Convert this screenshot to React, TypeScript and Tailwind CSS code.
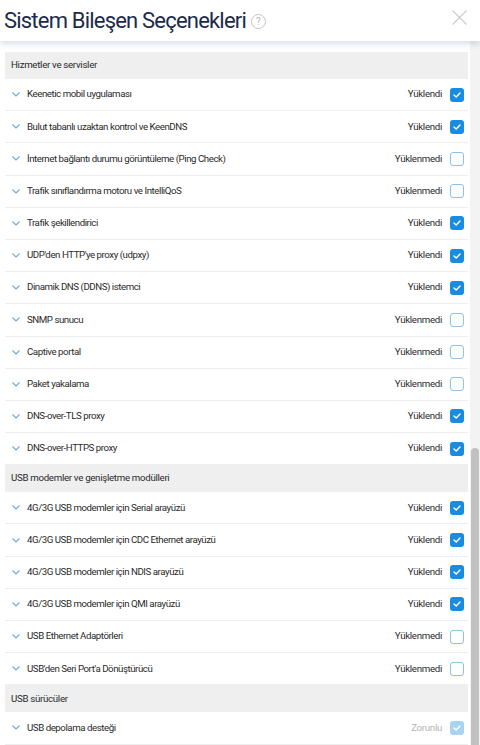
import React from "react";

type Row = { label: string; status: "Yüklendi" | "Yüklenmedi" | "Zorunlu" };
type Section = { title: string; rows: Row[] };

const sections: Section[] = [
  {
    title: "Hizmetler ve servisler",
    rows: [
      { label: "Keenetic mobil uygulaması", status: "Yüklendi" },
      { label: "Bulut tabanlı uzaktan kontrol ve KeenDNS", status: "Yüklendi" },
      { label: "İnternet bağlantı durumu görüntüleme (Ping Check)", status: "Yüklenmedi" },
      { label: "Trafik sınıflandırma motoru ve IntelliQoS", status: "Yüklenmedi" },
      { label: "Trafik şekillendirici", status: "Yüklendi" },
      { label: "UDP'den HTTP'ye proxy (udpxy)", status: "Yüklendi" },
      { label: "Dinamik DNS (DDNS) istemci", status: "Yüklendi" },
      { label: "SNMP sunucu", status: "Yüklenmedi" },
      { label: "Captive portal", status: "Yüklenmedi" },
      { label: "Paket yakalama", status: "Yüklenmedi" },
      { label: "DNS-over-TLS proxy", status: "Yüklendi" },
      { label: "DNS-over-HTTPS proxy", status: "Yüklendi" },
    ],
  },
  {
    title: "USB modemler ve genişletme modülleri",
    rows: [
      { label: "4G/3G USB modemler için Serial arayüzü", status: "Yüklendi" },
      { label: "4G/3G USB modemler için CDC Ethernet arayüzü", status: "Yüklendi" },
      { label: "4G/3G USB modemler için NDIS arayüzü", status: "Yüklendi" },
      { label: "4G/3G USB modemler için QMI arayüzü", status: "Yüklendi" },
      { label: "USB Ethernet Adaptörleri", status: "Yüklenmedi" },
      { label: "USB'den Seri Port'a Dönüştürücü", status: "Yüklenmedi" },
    ],
  },
  {
    title: "USB sürücüler",
    rows: [{ label: "USB depolama desteği", status: "Zorunlu" }],
  },
];

function Chevron() {
  return (
    <svg width="8" height="5" viewBox="0 0 8 5" className="shrink-0">
      <path d="M0.5 0.5 L4 4 L7.5 0.5" fill="none" stroke="#6aa9dc" strokeWidth="1.1" />
    </svg>
  );
}

function Checkbox({ status }: { status: Row["status"] }) {
  if (status === "Yüklenmedi") {
    return <div className="w-[14px] h-[14px] rounded-[3px] border border-[#8cc3ea] bg-white shrink-0" />;
  }
  const disabled = status === "Zorunlu";
  return (
    <div
      className={`w-[14px] h-[14px] rounded-[3px] flex items-center justify-center shrink-0 ${
        disabled ? "bg-[#a9d3f2]" : "bg-[#1a8ce0]"
      }`}
    >
      <svg width="8" height="6" viewBox="0 0 8 6">
        <path d="M1 3 L3.2 5 L7 1" fill="none" stroke="white" strokeWidth="1.4" strokeLinecap="round" strokeLinejoin="round" />
      </svg>
    </div>
  );
}

function RowView({ row }: { row: Row }) {
  return (
    <div className="h-[32.2px] flex items-center border-b border-[#eeeeee] pl-[7px] pr-[4px]">
      <Chevron />
      <span className="ml-[7px] text-[9.7px] tracking-[-0.45px] text-[#2a2a2a] flex-1 truncate">{row.label}</span>
      <span
        className={`text-[9.7px] tracking-[-0.3px] mr-[8px] ${
          row.status === "Zorunlu" ? "text-[#b5b5b5]" : "text-[#2a2a2a]"
        }`}
      >
        {row.status}
      </span>
      <Checkbox status={row.status} />
    </div>
  );
}

export default function App() {
  return (
    <div
      className="w-[480px] h-[745px] overflow-hidden bg-white flex flex-col"
      style={{ fontFamily: "Roboto, 'Noto Sans', sans-serif" }}
    >
      <div className="h-[41px] shrink-0 flex items-center px-[4px] bg-white relative z-10 shadow-[0_3px_6px_rgba(60,80,140,0.18)]">
        <span className="text-[22px] tracking-[-0.8px] text-[#1c2b4b] leading-none">Sistem Bileşen Seçenekleri</span>
        <div className="ml-[5px] mt-[2px] w-[15px] h-[15px] rounded-full border border-[#c4c4c4] flex items-center justify-center text-[10px] text-[#b9b9b9] leading-none">
          ?
        </div>
        <div className="flex-1" />
        <svg width="15" height="15" viewBox="0 0 15 15" className="mr-[9px] mb-[6px]">
          <path d="M0.5 0.5 L14.5 14.5 M14.5 0.5 L0.5 14.5" stroke="#c8cbd6" strokeWidth="1.1" />
        </svg>
      </div>
      <div className="flex-1 flex min-h-0">
        <div className="flex-1 pl-[5px] pr-[2px] pt-[11px] overflow-hidden">
          {sections.map((s) => (
            <div key={s.title}>
              <div className="h-[27px] bg-[#efeff0] flex items-center pl-[6px] text-[9.7px] tracking-[-0.3px] text-[#2a2a2a]">
                {s.title}
              </div>
              {s.rows.map((r) => (
                <RowView key={r.label} row={r} />
              ))}
            </div>
          ))}
        </div>
        <div className="w-[10px] bg-[#f3f3f3] flex flex-col shrink-0">
          <div className="h-[407px]" />
          <div className="flex-1 mx-[1px] rounded-t-[4px] bg-[#c1c1c1]" />
        </div>
      </div>
    </div>
  );
}
